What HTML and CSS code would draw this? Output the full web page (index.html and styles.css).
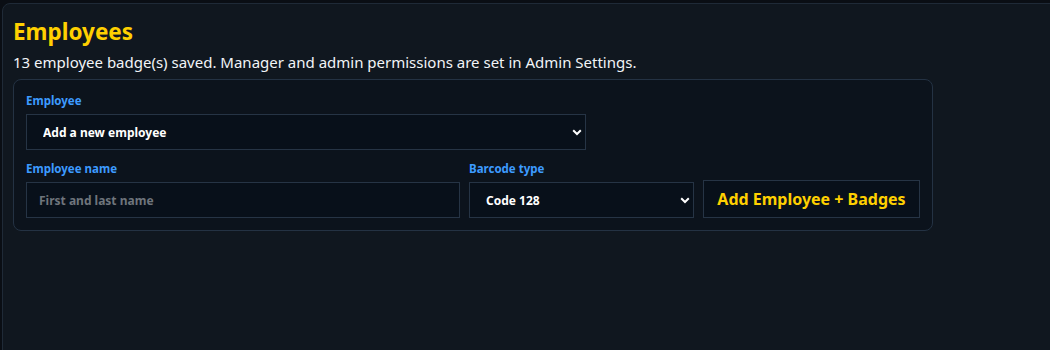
FILE: index.html
```html
<!DOCTYPE html>
<html lang="en">
<head>
  <meta charset="UTF-8" />
  <meta name="viewport" content="width=device-width, initial-scale=1.0"/>
  <title>Employees</title>
  <link rel="stylesheet" href="styles.css">
</head>
<body>

  <div class="panel">
    <h1>Employees</h1>
    <p class="summary">13 employee badge(s) saved. Manager and admin permissions are set in Admin Settings.</p>

    <div class="card">
      <div class="field pick">
        <label for="employeeSelect">Employee</label>
        <div class="select-wrap">
          <select id="employeeSelect">
            <option>Add a new employee</option>
          </select>
          <svg class="chevron" viewBox="0 0 10 7" width="10" height="7"><path d="M1.2 1.3 L5 5 L8.8 1.3" fill="none" stroke="#fff" stroke-width="2"/></svg>
        </div>
      </div>

      <div class="row">
        <div class="field">
          <label for="employeeName">Employee name</label>
          <input id="employeeName" type="text" placeholder="First and last name">
        </div>
        <div class="field">
          <label for="barcodeType">Barcode type</label>
          <div class="select-wrap">
            <select id="barcodeType">
              <option>Code 128</option>
              <option>Code 39</option>
              <option>QR Code</option>
            </select>
            <svg class="chevron" viewBox="0 0 10 7" width="10" height="7"><path d="M1.2 1.3 L5 5 L8.8 1.3" fill="none" stroke="#fff" stroke-width="2"/></svg>
          </div>
        </div>
        <button class="add-btn">Add Employee + Badges</button>
      </div>
    </div>
  </div>

</body>
</html>
```

FILE: styles.css
```css
body {
  margin: 0;
  padding: 3px 0 0 2px;
  background: #0a0e14;
  font-family: 'Segoe UI', 'Noto Sans', sans-serif;
  height: 100vh;
  overflow: hidden;
  box-sizing: border-box;
}

/* Main panel */
.panel {
  margin-right: -20px;
  height: 360px;
  box-sizing: border-box;
  background: #10171f;
  border: 1px solid #1f2a37;
  border-radius: 8px;
  padding: 12px 10px;
}

h1 {
  margin: 0;
  font-size: 22.5px;
  line-height: 32px;
  font-weight: 700;
  color: #ffd000;
}

.summary {
  margin: 3px 0 6px;
  font-size: 15px;
  line-height: 22px;
  color: #f2f4f7;
}

.card {
  width: 920px;
  box-sizing: border-box;
  background: #0c131c;
  border: 1px solid #243243;
  border-radius: 8px;
  padding: 12px;
}

.field label {
  display: block;
  font-size: 11.5px;
  line-height: 15px;
  font-weight: 700;
  color: #3d9bff;
  margin: 1px 0 6px;
}

.pick {
  width: 560px;
}

.row {
  display: grid;
  grid-template-columns: 434px 225px 1fr;
  gap: 9px;
  align-items: end;
  margin-top: 10px;
}

.select-wrap {
  position: relative;
}

select,
input {
  display: block;
  width: 100%;
  height: 36px;
  box-sizing: border-box;
  background: #08101a;
  border: 1px solid #263445;
  border-radius: 0;
  color: #ffffff;
  font-family: inherit;
  font-size: 12px;
  font-weight: 700;
  outline: none;
}

select {
  appearance: none;
  -webkit-appearance: none;
  padding: 0 30px 0 16px;
}

input {
  padding: 0 12px;
}

input::placeholder {
  color: #6f757c;
}

.chevron {
  position: absolute;
  right: 4px;
  top: 50%;
  margin-top: -3px;
  pointer-events: none;
}

.add-btn {
  height: 38px;
  box-sizing: border-box;
  background: #08101a;
  border: 1px solid #263445;
  color: #ffd000;
  font-family: inherit;
  font-size: 16px;
  font-weight: 700;
  padding: 0 12px;
  cursor: pointer;
}
```
